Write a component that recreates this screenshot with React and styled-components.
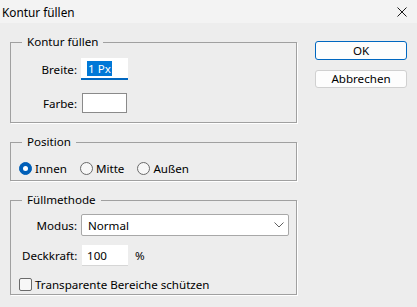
import React from 'react';
import styled, { createGlobalStyle } from 'styled-components';

const GlobalStyle = createGlobalStyle`
  html, body { margin: 0; padding: 0; }
  body {
    background: #ededed;
    font-family: "Noto Sans", "Liberation Sans", Arial, sans-serif;
    font-size: 11.6px;
    color: #000;
  }
`;

const Window = styled.div`
  width: 417px;
  height: 307px;
  display: flex;
  flex-direction: column;
  background: #ededed;
  overflow: hidden;
`;

const TitleBar = styled.div`
  height: 23px;
  flex: none;
  background: #f3f3f3;
  display: flex;
  align-items: center;
  justify-content: space-between;
  padding: 0 9px 0 2px;
  box-sizing: border-box;
`;

const Title = styled.span`
  font-size: 11.8px;
  line-height: 16px;
`;

const CloseButton = styled.div`
  width: 12px;
  height: 12px;
  display: flex;
  align-items: center;
  justify-content: center;
`;

const Body = styled.div`
  display: flex;
  align-items: flex-start;
  gap: 18px;
  padding: 11px 0 0 10px;
`;

const Groups = styled.div`
  width: 287px;
  display: flex;
  flex-direction: column;
  gap: 11px;
`;

const Group = styled.fieldset`
  margin: 0;
  padding: 0;
  min-width: 0;
  height: ${p => p.$h}px;
  box-sizing: border-box;
  border: 1px solid #a0a0a0;
  box-shadow: 1px 1px 0 #fff;
`;

const Legend = styled.legend`
  margin-left: 11px;
  padding: 0 5px;
  line-height: 16px;
`;

const Content = styled.div`
  display: flex;
  flex-direction: column;
  gap: ${p => p.$gap || 0}px;
  padding: ${p => p.$top}px 0 0 ${p => p.$left}px;
`;

const Row = styled.div`
  display: flex;
  align-items: center;
  height: ${p => p.$h}px;
`;

const Label = styled.span`
  width: 55px;
  text-align: right;
  margin-right: 4px;
  white-space: nowrap;
`;

const TextBox = styled.div`
  width: ${p => p.$w}px;
  height: ${p => p.$h}px;
  box-sizing: border-box;
  background: #fff;
  display: flex;
  align-items: center;
  padding-left: ${p => (p.$focused ? 6 : 5)}px;
  border-bottom: ${p => (p.$focused ? '2px solid #0067c0' : '1px solid #d6d6d6')};
  margin-left: ${p => p.$ml || 0}px;
`;

const Selected = styled.span`
  background: #0078d7;
  color: #fff;
  line-height: 15px;
  padding: 0 1px;
`;

const ColorBox = styled.div`
  width: 45px;
  height: 20px;
  box-sizing: border-box;
  margin-left: 1px;
  background: #fff;
  border: 1px solid #8a8a8a;
`;

const Select = styled.div`
  width: 208px;
  height: 22px;
  box-sizing: border-box;
  background: #fff;
  border: 1px solid #a8a8a8;
  border-radius: 2px;
  display: flex;
  align-items: center;
  justify-content: space-between;
  padding: 0 4px 0 6px;
`;

const Unit = styled.span`
  margin-left: 7px;
`;

const RadioRow = styled.div`
  display: flex;
  align-items: center;
  gap: 13px;
  height: 16px;
`;

const Option = styled.label`
  display: flex;
  align-items: center;
  gap: 3px;
`;

const RadioDot = styled.span`
  width: 13px;
  height: 13px;
  box-sizing: border-box;
  border-radius: 50%;
  display: flex;
  align-items: center;
  justify-content: center;
  background: ${p => (p.$on ? '#005fb8' : '#f7f7f7')};
  border: 1px solid ${p => (p.$on ? '#005fb8' : '#6a6a6a')};
  &::after {
    content: '';
    display: ${p => (p.$on ? 'block' : 'none')};
    width: 5px;
    height: 5px;
    border-radius: 50%;
    background: #fff;
  }
`;

const CheckBox = styled.span`
  width: 13px;
  height: 13px;
  box-sizing: border-box;
  border-radius: 2px;
  border: 1px solid #6a6a6a;
  background: #f7f7f7;
`;

const Buttons = styled.div`
  display: flex;
  flex-direction: column;
  gap: 10px;
  margin-top: 7px;
`;

const Button = styled.button`
  width: 92px;
  height: ${p => (p.$primary ? 19 : 18)}px;
  box-sizing: border-box;
  padding: 0;
  font-family: inherit;
  font-size: 11.6px;
  line-height: 14px;
  color: #000;
  background: #fdfdfd;
  border: 1px solid ${p => (p.$primary ? '#0067c0' : '#d0d0d0')};
  border-radius: 3px;
`;

function Radio({ on, children }) {
  return (
    <Option>
      <RadioDot $on={on} />
      {children}
    </Option>
  );
}

export default function App() {
  return (
    <>
      <GlobalStyle />
      <Window>
        <TitleBar>
          <Title>Kontur füllen</Title>
          <CloseButton>
            <svg width="10" height="10" viewBox="0 0 10 10">
              <path d="M0.5 0.5 L9.5 9.5 M9.5 0.5 L0.5 9.5" stroke="#1a1a1a" strokeWidth="1" />
            </svg>
          </CloseButton>
        </TitleBar>
        <Body>
          <Groups>
            <Group $h={89}>
              <Legend>Kontur füllen</Legend>
              <Content $top={8} $left={11} $gap={13}>
                <Row $h={22}>
                  <Label>Breite:</Label>
                  <TextBox $w={47} $h={22} $focused>
                    <Selected>1 Px</Selected>
                  </TextBox>
                </Row>
                <Row $h={20}>
                  <Label>Farbe:</Label>
                  <ColorBox />
                </Row>
              </Content>
            </Group>
            <Group $h={47}>
              <Legend>Position</Legend>
              <Content $top={10} $left={8}>
                <RadioRow>
                  <Radio on>Innen</Radio>
                  <Radio>Mitte</Radio>
                  <Radio>Außen</Radio>
                </RadioRow>
              </Content>
            </Group>
            <Group $h={103}>
              <Legend>Füllmethode</Legend>
              <Content $top={6} $left={11}>
                <Row $h={22}>
                  <Label>Modus:</Label>
                  <Select>
                    <span>Normal</span>
                    <svg width="10" height="6" viewBox="0 0 10 6">
                      <path d="M0.5 0.5 L5 5 L9.5 0.5" fill="none" stroke="#606060" strokeWidth="1" />
                    </svg>
                  </Select>
                </Row>
                <Row $h={21} style={{ marginTop: 9 }}>
                  <Label>Deckkraft:</Label>
                  <TextBox $w={46} $h={21} $ml={1}>100</TextBox>
                  <Unit>%</Unit>
                </Row>
              </Content>
              <Content $top={11} $left={8}>
                <Option>
                  <CheckBox />
                  Transparente Bereiche schützen
                </Option>
              </Content>
            </Group>
          </Groups>
          <Buttons>
            <Button $primary>OK</Button>
            <Button>Abbrechen</Button>
          </Buttons>
        </Body>
      </Window>
    </>
  );
}
